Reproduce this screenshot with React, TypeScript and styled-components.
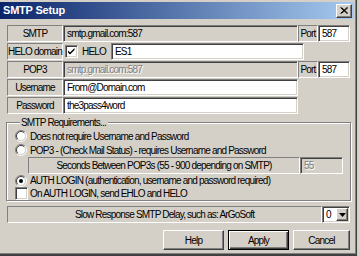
import styled, { createGlobalStyle } from 'styled-components';

const GlobalStyle = createGlobalStyle`
  html, body {
    margin: 0;
    padding: 0;
    background: #d4d0c8;
  }
  body {
    font-family: "Liberation Sans", Arial, sans-serif;
    font-size: 10px;
    letter-spacing: -0.8px;
    line-height: 13px;
    color: #000;
  }
  * {
    box-sizing: border-box;
  }
`;

const Window = styled.div`
  width: 357px;
  height: 256px;
  padding-top: 2px;
  background: #d4d0c8;
  border-right: 1px solid #404040;
  border-bottom: 2px solid #404040;
  box-shadow: inset -1px -1px #808080;
  display: flex;
  flex-direction: column;
`;

const TitleBar = styled.div`
  height: 17px;
  margin-right: 2px;
  padding: 0 2px 0 3px;
  display: flex;
  align-items: center;
  background: linear-gradient(to right, #0a246a, #a6caf0);
`;

const Title = styled.span`
  color: #fff;
  font-weight: bold;
  font-size: 11px;
  letter-spacing: -0.2px;
`;

const CloseButton = styled.div`
  margin-left: auto;
  width: 16px;
  height: 14px;
  background: #d4d0c8;
  border: 1px solid;
  border-color: #fff #404040 #404040 #fff;
  box-shadow: inset -1px -1px #808080;
  display: flex;
  align-items: center;
  justify-content: center;
`;

const Content = styled.div`
  padding: 6px 6px 0 7px;
  display: flex;
  flex-direction: column;
`;

const Row = styled.div`
  display: flex;
  align-items: center;
  height: 17px;
  margin-bottom: 1px;
`;

const Cell = styled.div<{ $w: number }>`
  width: ${(p) => p.$w}px;
  height: 17px;
  flex: none;
  display: flex;
  align-items: center;
  justify-content: center;
  border: 1px solid;
  border-color: #808080 #fff #fff #808080;
  white-space: nowrap;
`;

const Field = styled.div<{ $w: number; $white?: boolean; $dim?: boolean }>`
  width: ${(p) => p.$w}px;
  height: 17px;
  flex: none;
  padding: 0 3px;
  display: flex;
  align-items: center;
  background: ${(p) => (p.$white ? '#fff' : '#d4d0c8')};
  color: ${(p) => (p.$dim ? '#808080' : '#000')};
  text-shadow: ${(p) => (p.$dim ? '1px 1px #fff' : 'none')};
  border: 1px solid;
  border-color: #808080 #fff #fff #808080;
  box-shadow: inset 1px 1px #404040, inset -1px -1px #d4d0c8;
  white-space: nowrap;
  overflow: hidden;
`;

const CheckBox = styled.div<{ $ml?: number }>`
  width: 13px;
  height: 13px;
  flex: none;
  margin-left: ${(p) => p.$ml ?? 0}px;
  background: #fff;
  border: 1px solid;
  border-color: #808080 #fff #fff #808080;
  box-shadow: inset 1px 1px #404040, inset -1px -1px #d4d0c8;
  display: flex;
  align-items: center;
  justify-content: center;
`;

const InlineText = styled.span<{ $ml?: number; $w?: number }>`
  margin-left: ${(p) => p.$ml ?? 0}px;
  width: ${(p) => (p.$w ? `${p.$w}px` : 'auto')};
  flex: none;
  white-space: nowrap;
`;

const Group = styled.fieldset`
  margin: 1px 0 0 -1px;
  width: 345px;
  min-width: 0;
  padding: 0 0 0 8px;
  border: 1px solid #808080;
  box-shadow: inset 1px 1px #fff, 1px 1px #fff;
`;

const Legend = styled.legend`
  margin-left: 5px;
  padding: 0 2px 0 1px;
  background: #d4d0c8;
  line-height: 13px;
`;

const Option = styled.div<{ $h?: number }>`
  display: flex;
  align-items: center;
  height: ${(p) => p.$h ?? 13}px;
  white-space: nowrap;
`;

const SecondsRow = styled.div`
  display: flex;
  align-items: center;
  height: 17px;
  margin-left: 13px;
`;

const SlowRow = styled.div`
  display: flex;
  align-items: center;
  height: 17px;
  margin-top: 5px;
`;

const Select = styled.div`
  width: 28px;
  height: 17px;
  flex: none;
  background: #fff;
  border: 1px solid;
  border-color: #808080 #fff #fff #808080;
  box-shadow: inset 1px 1px #404040, inset -1px -1px #d4d0c8;
  display: flex;
  align-items: stretch;
  padding: 1px;
`;

const SelectValue = styled.span`
  flex: 1;
  padding-left: 2px;
  line-height: 13px;
`;

const DropButton = styled.div`
  width: 12px;
  background: #d4d0c8;
  border: 1px solid;
  border-color: #fff #404040 #404040 #fff;
  box-shadow: inset -1px -1px #808080;
  display: flex;
  align-items: center;
  justify-content: center;
`;

const Buttons = styled.div`
  display: flex;
  justify-content: flex-end;
  gap: 4px;
  margin-top: 7px;
`;

const Button = styled.div<{ $w: number; $default?: boolean }>`
  width: ${(p) => p.$w}px;
  height: 20px;
  display: flex;
  align-items: center;
  justify-content: center;
  background: #d4d0c8;
  border: 1px solid;
  border-color: ${(p) => (p.$default ? '#000' : '#fff #404040 #404040 #fff')};
  box-shadow: ${(p) =>
    p.$default
      ? 'inset 1px 1px #fff, inset -1px -1px #404040, inset -2px -2px #808080'
      : 'inset -1px -1px #808080'};
`;

const Radio = ({ checked }: { checked?: boolean }) => (
  <svg width="12" height="12" viewBox="0 0 12 12" style={{ flex: 'none', marginRight: 3 }}>
    <circle cx="6" cy="6" r="4.5" fill="#fff" />
    <path d="M2.1 9.9 A5.5 5.5 0 0 1 9.9 2.1" fill="none" stroke="#808080" />
    <path d="M2.8 9.2 A4.5 4.5 0 0 1 9.2 2.8" fill="none" stroke="#404040" />
    <path d="M9.9 2.1 A5.5 5.5 0 0 1 2.1 9.9" fill="none" stroke="#fff" />
    <path d="M9.2 2.8 A4.5 4.5 0 0 1 2.8 9.2" fill="none" stroke="#d4d0c8" />
    {checked && <circle cx="6" cy="6" r="2" fill="#000" />}
  </svg>
);

const Check = () => (
  <svg width="9" height="9" viewBox="0 0 9 9">
    <path d="M1 3.5 L3 5.5 L7.5 1 L7.5 3 L3 7.5 L1 5.5 Z" fill="#000" />
  </svg>
);

export default function App() {
  return (
    <>
      <GlobalStyle />
      <Window>
        <TitleBar>
          <Title>SMTP Setup</Title>
          <CloseButton>
            <svg width="8" height="7" viewBox="0 0 8 7">
              <path d="M0.5 0.5 L7 6.5 M1.5 0.5 L8 6.5 M7 0.5 L0.5 6.5 M8 0.5 L1.5 6.5" stroke="#000" strokeWidth="1" />
            </svg>
          </CloseButton>
        </TitleBar>
        <Content>
          <Row>
            <Cell $w={56}>SMTP</Cell>
            <Field $w={235}>smtp.gmail.com:587</Field>
            <Cell $w={20}>Port</Cell>
            <Field $w={32} $white>587</Field>
          </Row>
          <Row>
            <Cell $w={56}>HELO domain</Cell>
            <CheckBox $ml={2}>
              <Check />
            </CheckBox>
            <InlineText $ml={4} $w={29}>HELO</InlineText>
            <Field $w={193} $white>ES1</Field>
          </Row>
          <Row>
            <Cell $w={56}>POP3</Cell>
            <Field $w={235} $dim>smtp.gmail.com:587</Field>
            <Cell $w={20}>Port</Cell>
            <Field $w={32} $white>587</Field>
          </Row>
          <Row>
            <Cell $w={56}>Username</Cell>
            <Field $w={235} $white>From@Domain.com</Field>
          </Row>
          <Row>
            <Cell $w={56}>Password</Cell>
            <Field $w={235} $white>the3pass4word</Field>
          </Row>

          <Group>
            <Legend>SMTP Requirements...</Legend>
            <Option $h={14}>
              <Radio />
              Does not require Username and Password
            </Option>
            <Option $h={14}>
              <Radio />
              POP3 - (Check Mail Status) - requires Username and Password
            </Option>
            <SecondsRow>
              <Cell $w={272}>Seconds Between POP3s (55 - 900 depending on SMTP)</Cell>
              <Field $w={43} $dim>55</Field>
            </SecondsRow>
            <Option>
              <Radio checked />
              AUTH LOGIN (authentication, username and password required)
            </Option>
            <Option>
              <CheckBox />
              <InlineText $ml={2}>On AUTH LOGIN, send EHLO and HELO</InlineText>
            </Option>
          </Group>

          <SlowRow>
            <Cell $w={315}>Slow Response SMTP Delay, such as: ArGoSoft</Cell>
            <Select>
              <SelectValue>0</SelectValue>
              <DropButton>
                <svg width="7" height="4" viewBox="0 0 7 4">
                  <path d="M0 0 H7 L3.5 4 Z" fill="#000" />
                </svg>
              </DropButton>
            </Select>
          </SlowRow>

          <Buttons>
            <Button $w={61}>Help</Button>
            <Button $w={61} $default>Apply</Button>
            <Button $w={57}>Cancel</Button>
          </Buttons>
        </Content>
      </Window>
    </>
  );
}
